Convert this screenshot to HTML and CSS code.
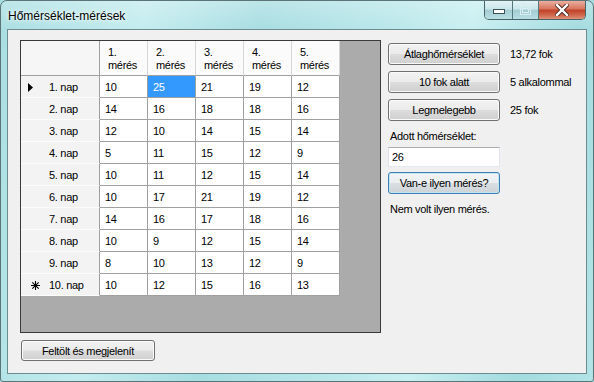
FILE: index.html
```html
<!DOCTYPE html>
<html lang="hu">
<head>
<meta charset="utf-8">
<title>Hőmérséklet-mérések</title>
<link rel="stylesheet" href="styles.css">
</head>
<body>
<div class="window">
  <div class="titlebar">
    <div class="title">Hőmérséklet-mérések</div>
    <div class="caption">
      <div class="cbtn min">
        <svg width="12" height="6" viewBox="0 0 12 6"><rect x="0.5" y="0.5" width="11" height="4" fill="#fff" stroke="#3d5256"/></svg>
      </div>
      <div class="cbtn max">
        <svg width="11" height="10" viewBox="0 0 11 10"><rect x="0.5" y="0.5" width="10" height="9" fill="none" stroke="#d9eef0"/><rect x="2.5" y="3.5" width="6" height="4" fill="none" stroke="#d9eef0"/></svg>
      </div>
      <div class="cbtn close">
        <svg width="14" height="12" viewBox="0 0 14 12"><path d="M2 1 L12 11 M12 1 L2 11" stroke="#4a2a22" stroke-width="4.2" stroke-linecap="square"/><path d="M2 1 L12 11 M12 1 L2 11" stroke="#fff" stroke-width="2.4" stroke-linecap="square"/></svg>
      </div>
    </div>
  </div>
  <div class="client">
    <div class="left">
      <div class="gridview">
        <div class="table">
          <div class="hcell corner"></div>
          <div class="hcell">1.<br>mérés</div>
          <div class="hcell">2.<br>mérés</div>
          <div class="hcell">3.<br>mérés</div>
          <div class="hcell">4.<br>mérés</div>
          <div class="hcell">5.<br>mérés</div>

          <div class="rh"><span class="ind"><svg class="tri" width="5" height="9" viewBox="0 0 5 9"><path d="M0 0 L5 4.5 L0 9 Z" fill="#000"/></svg></span>1. nap</div>
          <div class="c">10</div><div class="c sel">25</div><div class="c">21</div><div class="c">19</div><div class="c">12</div>

          <div class="rh"><span class="ind"></span>2. nap</div>
          <div class="c">14</div><div class="c">16</div><div class="c">18</div><div class="c">18</div><div class="c">16</div>

          <div class="rh"><span class="ind"></span>3. nap</div>
          <div class="c">12</div><div class="c">10</div><div class="c">14</div><div class="c">15</div><div class="c">14</div>

          <div class="rh"><span class="ind"></span>4. nap</div>
          <div class="c">5</div><div class="c">11</div><div class="c">15</div><div class="c">12</div><div class="c">9</div>

          <div class="rh"><span class="ind"></span>5. nap</div>
          <div class="c">10</div><div class="c">11</div><div class="c">12</div><div class="c">15</div><div class="c">14</div>

          <div class="rh"><span class="ind"></span>6. nap</div>
          <div class="c">10</div><div class="c">17</div><div class="c">21</div><div class="c">19</div><div class="c">12</div>

          <div class="rh"><span class="ind"></span>7. nap</div>
          <div class="c">14</div><div class="c">16</div><div class="c">17</div><div class="c">18</div><div class="c">16</div>

          <div class="rh"><span class="ind"></span>8. nap</div>
          <div class="c">10</div><div class="c">9</div><div class="c">12</div><div class="c">15</div><div class="c">14</div>

          <div class="rh"><span class="ind"></span>9. nap</div>
          <div class="c">8</div><div class="c">10</div><div class="c">13</div><div class="c">12</div><div class="c">9</div>

          <div class="rh"><span class="ind"><svg class="star" width="9" height="9" viewBox="0 0 9 9"><path d="M4.5 0 V9 M0 4.5 H9 M1.3 1.3 L7.7 7.7 M7.7 1.3 L1.3 7.7" stroke="#000" stroke-width="1.1"/></svg></span>10. nap</div>
          <div class="c">10</div><div class="c">12</div><div class="c">15</div><div class="c">16</div><div class="c">13</div>
        </div>
      </div>
      <button class="btn fill">Feltölt és megjelenít</button>
    </div>
    <div class="right">
      <div class="row"><button class="btn act">Átlaghőmérséklet</button><span class="lbl">13,72 fok</span></div>
      <div class="row"><button class="btn act">10 fok alatt</button><span class="lbl">5 alkalommal</span></div>
      <div class="row"><button class="btn act">Legmelegebb</button><span class="lbl">25 fok</span></div>
      <div class="caption-lbl">Adott hőmérséklet:</div>
      <div class="textbox">26</div>
      <button class="btn act focus">Van-e ilyen mérés?</button>
      <div class="result">Nem volt ilyen mérés.</div>
    </div>
  </div>
</div>
</body>
</html>
```
FILE: styles.css
```css
html, body {
  margin: 0;
  padding: 0;
  background: #a6dde1;
}
body {
  font-family: "Liberation Sans", Arial, sans-serif;
  font-size: 11px;
  letter-spacing: -0.3px;
  color: #000;
}
.window {
  width: 594px;
  height: 382px;
  box-sizing: border-box;
  border: 1px solid #5b7477;
  border-radius: 7px 7px 3px 3px;
  background:
    linear-gradient(180deg, rgba(255,255,255,0.25) 0px, rgba(255,255,255,0) 30px),
    linear-gradient(100deg, #a9dee2 0%, #c3ecef 22%, #a7dde1 40%, #b9e7ea 60%, #c8eff1 72%, #a3dbdf 88%, #b3e4e7 100%);
  display: flex;
  flex-direction: column;
  overflow: hidden;
}
.titlebar {
  height: 28px;
  flex: none;
  display: flex;
  justify-content: space-between;
  align-items: flex-start;
}
.title {
  padding: 8px 0 0 7px;
  font-size: 12px;
  line-height: 14px;
  letter-spacing: 0;
  color: #000;
  text-shadow: 0 0 6px rgba(255,255,255,0.95), 0 0 3px rgba(255,255,255,0.9);
}
.caption {
  display: flex;
  margin-right: 7px;
  height: 18px;
  border: 1px solid #486266;
  border-top: none;
  border-radius: 0 0 5px 5px;
  overflow: hidden;
}
.cbtn {
  display: flex;
  align-items: center;
  justify-content: center;
  height: 18px;
}
.min {
  width: 27px;
  border-right: 1px solid #56777b;
  background: linear-gradient(180deg, #e2f3f5 0%, #c9e6ea 45%, #a3ccd2 52%, #b8dfe4 100%);
  align-items: flex-end;
}
.min svg { margin-bottom: 4px; }
.max {
  width: 25px;
  border-right: 1px solid #56777b;
  background: linear-gradient(180deg, #e2f3f5 0%, #c9e6ea 45%, #a3ccd2 52%, #b8dfe4 100%);
}
.close {
  width: 46px;
  background: linear-gradient(180deg, #eab0a2 0%, #d9775f 42%, #c2432a 52%, #cf6a4f 80%, #e0937c 100%);
}
.client {
  flex: 1;
  margin: 0 6px 7px 6px;
  border: 1px solid #6c8c90;
  background: #f0f0f0;
  display: flex;
  padding: 10px 0 0 12px;
}
.left {
  display: flex;
  flex-direction: column;
  align-items: flex-start;
}
.gridview {
  width: 361px;
  height: 293px;
  box-sizing: border-box;
  border: 1px solid #3a3a3a;
  background: #ababab;
}
.table {
  display: grid;
  grid-template-columns: 79px repeat(5, 48px);
  grid-template-rows: 35px repeat(10, 22px);
  width: 319px;
}
.hcell {
  box-sizing: border-box;
  background: #fbfbfb;
  border-right: 1px solid #d5d5d5;
  border-bottom: 1px solid #a0a0a0;
  padding: 5px 0 0 8px;
  line-height: 13px;
}
.hcell.corner {
  background: #f6f6f6;
  border-right: 1px solid #a0a0a0;
}
.hcell:last-child { border-right: 1px solid #a0a0a0; }
.rh {
  box-sizing: border-box;
  background: #f3f3f3;
  border-right: 1px solid #a0a0a0;
  border-bottom: 1px solid #fdfdfd;
  display: flex;
  align-items: center;
  padding-top: 1px;
}
.ind {
  width: 28px;
  height: 10px;
  display: flex;
  align-items: center;
  flex: none;
}
.tri { margin-left: 7px; }
.star { margin-left: 10px; }
.c {
  box-sizing: border-box;
  background: #fff;
  border-right: 1px solid #a0a0a0;
  border-bottom: 1px solid #a0a0a0;
  padding: 1px 0 0 5px;
  display: flex;
  align-items: center;
}
.c.sel {
  background: #3399ff;
  color: #fff;
}
.btn {
  font-family: "Liberation Sans", Arial, sans-serif;
  font-size: 11px;
  letter-spacing: -0.3px;
  color: #000;
  box-sizing: border-box;
  border: 1px solid #707070;
  border-radius: 3px;
  background: linear-gradient(180deg, #f2f2f2 0%, #ebebeb 48%, #dddddd 52%, #cfcfcf 100%);
  box-shadow: inset 0 0 0 1px #fbfbfb;
  padding: 0;
  margin: 0;
  text-align: center;
}
.btn.fill {
  width: 134px;
  height: 21px;
  margin: 7px 0 0 1px;
}
.right {
  display: flex;
  flex-direction: column;
  align-items: flex-start;
  margin-left: 7px;
  padding-top: 3px;
}
.row {
  display: flex;
  align-items: center;
  margin-bottom: 6px;
}
.btn.act {
  width: 112px;
  height: 22px;
}
.lbl {
  margin-left: 10px;
}
.caption-lbl {
  margin: 3px 0 0 2px;
  line-height: 13px;
}
.textbox {
  width: 112px;
  height: 20px;
  box-sizing: border-box;
  margin-top: 4px;
  border: 1px solid #abadb3;
  border-color: #abadb3 #e2e3ea #e3e9ef #dbdfe6;
  background: #fff;
  padding: 3px 0 0 3px;
  line-height: 13px;
}
.btn.focus {
  margin-top: 5px;
  border-color: #3c7fb1;
  box-shadow: inset 0 0 0 1px #c4e5f6;
  background: linear-gradient(180deg, #f3f5f6 0%, #eaeef0 48%, #dadfe2 52%, #ccd3d6 100%);
}
.result {
  margin: 9px 0 0 2px;
  line-height: 13px;
}
```
